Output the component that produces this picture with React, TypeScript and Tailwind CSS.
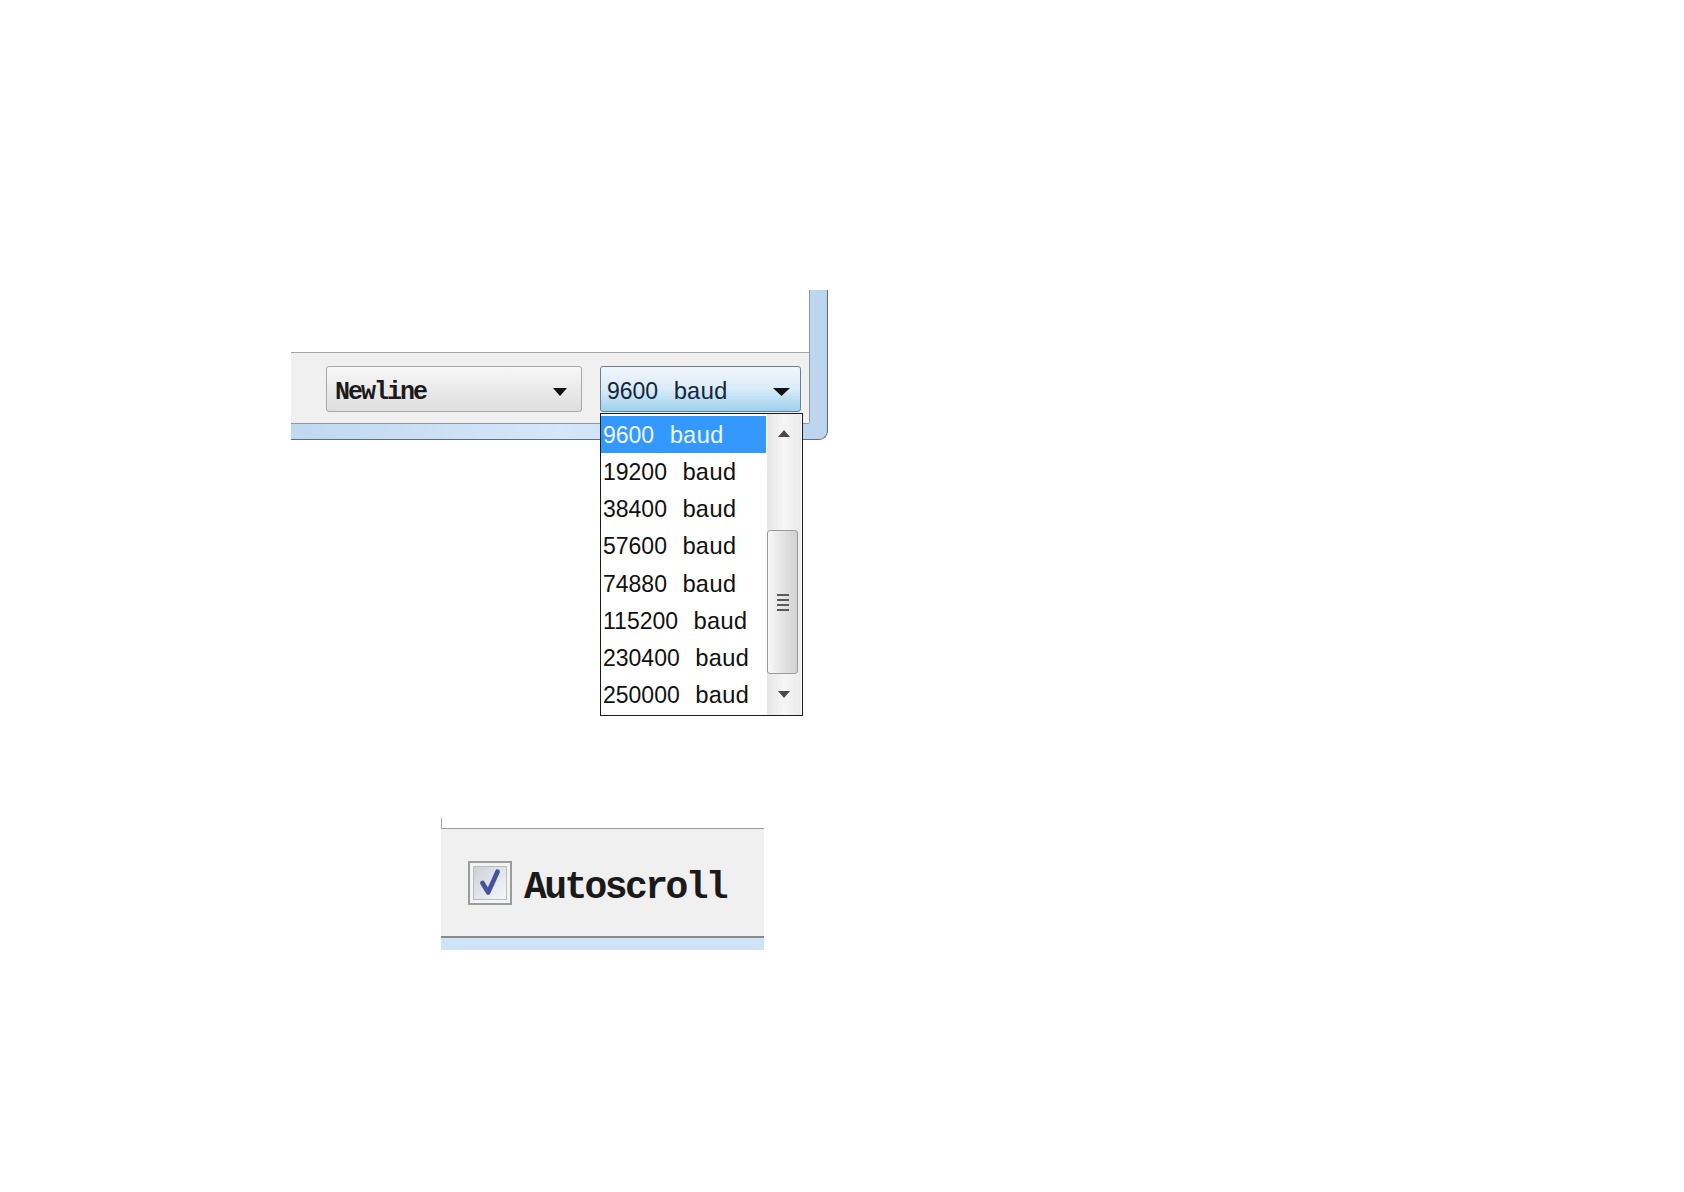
const digits = "font-['Liberation_Sans',Arial,sans-serif] text-[23px]";
const mono = "font-['Liberation_Mono','Courier_New',monospace]";

const rates = ["9600", "19200", "38400", "57600", "74880", "115200", "230400", "250000"];

function Baud({ n }: { n: string }) {
  return (
    <span className="flex items-baseline leading-none">
      <span className={digits}>{n}</span>
      <span className={`${mono} ml-[15px] text-[24px] tracking-[-1px]`}>baud</span>
    </span>
  );
}

function Caret({ w }: { w: number }) {
  return (
    <svg width={w} height="8" viewBox={`0 0 ${w} 8`}>
      <polygon points={`0,0 ${w},0 ${w / 2},8`} fill="#111" />
    </svg>
  );
}

function BaudList() {
  return (
    <div className="absolute left-[-1px] top-[46px] z-10 flex h-[303px] w-[203px] border border-[#1c1c1c] bg-white">
      <div className="grid h-[299px] w-[165px] grid-rows-8 pt-[2px]">
        {rates.map((r, i) => (
          <div
            key={r}
            className={
              i === 0
                ? "flex items-center bg-[#3399ff] pt-[4px] pl-[2px] text-[#eef6ff]"
                : "flex items-center pt-[4px] pl-[2px] text-[#111]"
            }
          >
            <Baud n={r} />
          </div>
        ))}
      </div>
      <div className="ml-[1px] flex w-[34px] flex-col bg-gradient-to-r from-[#e6e6e6] via-[#f6f6f6] to-[#ebebeb]">
        <div className="flex h-[38px] items-center justify-center">
          <svg width="12" height="7" viewBox="0 0 12 7">
            <polygon points="0,7 12,7 6,0" fill="#4a4a4a" />
          </svg>
        </div>
        <div className="mt-[78px] flex h-[144px] w-[31px] items-center justify-center rounded-[3px] border border-[#9a9a9a] bg-gradient-to-r from-[#f7f7f7] via-[#e4e4e4] to-[#d2d2d2]">
          <div className="flex flex-col gap-[3px]">
            <div className="h-[2px] w-[12px] bg-[#5a5a5a]" />
            <div className="h-[2px] w-[12px] bg-[#5a5a5a]" />
            <div className="h-[2px] w-[12px] bg-[#5a5a5a]" />
            <div className="h-[2px] w-[12px] bg-[#5a5a5a]" />
          </div>
        </div>
        <div className="flex flex-1 items-center justify-center">
          <svg width="12" height="7" viewBox="0 0 12 7">
            <polygon points="0,0 12,0 6,7" fill="#4a4a4a" />
          </svg>
        </div>
      </div>
    </div>
  );
}

export default function App() {
  return (
    <div className="min-h-[1192px] w-full bg-white pt-[290px]">
      <div className="ml-[291px] h-[150px] w-[537px] rounded-br-[9px] border-r border-b border-[#5e6e7f] bg-gradient-to-r from-[#c0d8f0] via-[#d5e7f8] to-[#bcd5ee] pr-[17px] pb-[15px]">
        <div className="flex h-full flex-col rounded-br-[3px] border-r border-b border-[#8b97a4] bg-white">
          <div className="h-[62px]" />
          <div className="flex flex-1 items-start gap-[18px] border-t border-[#a3a3a3] bg-[#f0f0f0] pt-[13px] pl-[35px]">
            <div className="flex h-[46px] w-[256px] items-center justify-between rounded-[3px] border border-[#a9a9a9] bg-gradient-to-b from-[#f7f7f7] to-[#dedede] pt-[6px] pr-[14px] pl-[8px]">
              <span className={`${mono} text-[25px] font-bold leading-none tracking-[-2px] text-[#1a1a1a]`}>Newline</span>
              <Caret w={14} />
            </div>
            <div className="relative flex h-[46px] w-[201px] items-center justify-between rounded-[3px] border border-[#6c7f90] bg-gradient-to-b from-[#f1f6f9] via-[#d9ecf8] to-[#9dd0f0] pt-[6px] pr-[10px] pl-[6px] text-[#16263a]">
              <Baud n="9600" />
              <Caret w={17} />
              <BaudList />
            </div>
          </div>
        </div>
      </div>

      <div className="mt-[378px] ml-[441px] w-[323px]">
        <div className="h-[10px] border-l border-[#a8a8a8]" />
        <div className="flex h-[108px] items-center gap-[12px] border-t border-[#9a9a9a] bg-[#f0f0f0] pl-[27px]">
          <div className="flex h-[44px] w-[44px] items-center justify-center border-2 border-[#9c9c9c] bg-[#f3f3f3] p-[3px]">
            <svg width="34" height="34" viewBox="0 0 34 34" className="border border-[#b9bcc3] bg-gradient-to-br from-[#cdd1d8] to-[#f7f7f8]">
              <path d="M9 17 L15 27 L25 5" fill="none" stroke="#47529a" strokeWidth="5" strokeLinecap="round" strokeLinejoin="round" />
            </svg>
          </div>
          <span className={`${mono} pt-[10px] text-[38px] font-bold leading-none tracking-[-2.6px] text-[#1a1a1a]`}>Autoscroll</span>
        </div>
        <div className="h-[2px] bg-[#8a8a8a]" />
        <div className="h-[12px] bg-[#cfe3f7]" />
      </div>
    </div>
  );
}
